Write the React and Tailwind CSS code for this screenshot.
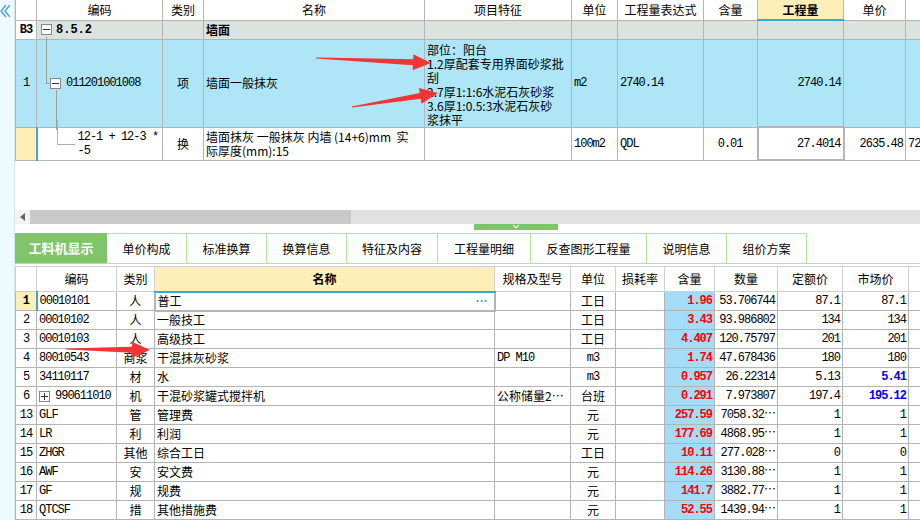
import React from "react";

const num = "font-['Liberation_Mono','Noto_Sans_CJK_SC',monospace] text-[12px] tracking-[-1px]";
const cell = "border border-[#b4b4b4] p-0 align-middle";

const lowerRows = [
  { no: "1", code: "00010101", type: "人", name: "普工", spec: "", unit: "工日", qty: "1.96", amount: "53.706744", quota: "87.1", market: "87.1" },
  { no: "2", code: "00010102", type: "人", name: "一般技工", spec: "", unit: "工日", qty: "3.43", amount: "93.986802", quota: "134", market: "134" },
  { no: "3", code: "00010103", type: "人", name: "高级技工", spec: "", unit: "工日", qty: "4.407", amount: "120.75797", quota: "201", market: "201" },
  { no: "4", code: "80010543", type: "商浆", name: "干混抹灰砂浆", spec: "DP M10", unit: "m3", qty: "1.74", amount: "47.678436", quota: "180", market: "180" },
  { no: "5", code: "34110117", type: "材", name: "水", spec: "", unit: "m3", qty: "0.957", amount: "26.22314", quota: "5.13", market: "5.41", blue: true },
  { no: "6", code: "990611010", plus: true, type: "机", name: "干混砂浆罐式搅拌机", spec: "公称储量2⋯", unit: "台班", qty: "0.291", amount: "7.973807", quota: "197.4", market: "195.12", blue: true },
  { no: "13", code: "GLF", type: "管", name: "管理费", spec: "", unit: "元", qty: "257.59", amount: "7058.32⋯", quota: "1", market: "1" },
  { no: "14", code: "LR", type: "利", name: "利润", spec: "", unit: "元", qty: "177.69", amount: "4868.95⋯", quota: "1", market: "1" },
  { no: "15", code: "ZHGR", type: "其他", name: "综合工日", spec: "", unit: "工日", qty: "10.11", amount: "277.028⋯", quota: "0", market: "0" },
  { no: "16", code: "AWF", type: "安", name: "安文费", spec: "", unit: "元", qty: "114.26", amount: "3130.88⋯", quota: "1", market: "1" },
  { no: "17", code: "GF", type: "规", name: "规费", spec: "", unit: "元", qty: "141.7", amount: "3882.77⋯", quota: "1", market: "1" },
  { no: "18", code: "QTCSF", type: "措", name: "其他措施费", spec: "", unit: "元", qty: "52.55", amount: "1439.94⋯", quota: "1", market: "1" },
];

const tabs = ["单价构成", "标准换算", "换算信息", "特征及内容", "工程量明细", "反查图形工程量", "说明信息", "组价方案"];
const tabWidths = ["w-[80px]", "w-[80px]", "w-[80px]", "w-[91px]", "w-[93px]", "w-[116px]", "w-[80px]", "w-[80px]"];

const Box = ({ sign }) => (
  <span className="inline-flex w-[11px] h-[11px] border border-[#888] bg-white items-center justify-center shrink-0">
    <svg width="7" height="7" viewBox="0 0 7 7">
      <path d="M0 3.5H7" stroke="#333" strokeWidth="1" />
      {sign === "+" && <path d="M3.5 0V7" stroke="#333" strokeWidth="1" />}
    </svg>
  </span>
);

const arrow = (x1, y1, x2, y2) => {
  const dx = x2 - x1, dy = y2 - y1;
  const L = Math.hypot(dx, dy);
  const ux = dx / L, uy = dy / L, nx = -uy, ny = ux;
  const bx = x2 - ux * 18, by = y2 - uy * 18;
  const p = [
    [x1 + nx * 0.5, y1 + ny * 0.5],
    [bx + nx * 3, by + ny * 3],
    [bx + nx * 8, by + ny * 8],
    [x2, y2],
    [bx - nx * 8, by - ny * 8],
    [bx - nx * 3, by - ny * 3],
    [x1 - nx * 0.5, y1 - ny * 0.5],
  ];
  return p.map((q) => q.join(",")).join(" ");
};

const App = () => {
  return (
    <div className="relative w-[920px] h-[520px] overflow-hidden bg-white flex font-['Noto_Sans_CJK_SC',sans-serif] text-[12px] text-black leading-[14px]">
      {/* left collapse strip */}
      <div className="w-[15px] shrink-0 bg-[#eefaff] border-r border-[#d6e6ee] pt-[4px]">
        <svg width="10" height="14" viewBox="0 0 10 14">
          <path d="M6 1L1 7L6 13" fill="none" stroke="#3ba0dc" strokeWidth="1.3" />
          <path d="M10 1L5 7L10 13" fill="none" stroke="#3ba0dc" strokeWidth="1.3" />
        </svg>
      </div>

      <div className="flex-1 flex flex-col min-w-0">
        {/* top table */}
        <div className="h-[210px] overflow-hidden">
          <table className="table-fixed border-collapse w-[935px]">
            <colgroup>
              <col className="w-[21px]" />
              <col className="w-[126px]" />
              <col className="w-[41px]" />
              <col className="w-[221px]" />
              <col className="w-[147px]" />
              <col className="w-[46px]" />
              <col className="w-[86px]" />
              <col className="w-[54px]" />
              <col className="w-[86px]" />
              <col className="w-[62px]" />
              <col className="w-[45px]" />
            </colgroup>
            <thead>
              <tr className="h-[20px] text-center">
                <th className={`${cell} border-t-0 font-normal`}></th>
                <th className={`${cell} border-t-0 font-normal`}>编码</th>
                <th className={`${cell} border-t-0 font-normal`}>类别</th>
                <th className={`${cell} border-t-0 font-normal`}>名称</th>
                <th className={`${cell} border-t-0 font-normal`}>项目特征</th>
                <th className={`${cell} border-t-0 font-normal`}>单位</th>
                <th className={`${cell} border-t-0 font-normal`}>工程量表达式</th>
                <th className={`${cell} border-t-0 font-normal`}>含量</th>
                <th className={`${cell} border-t-0 border-b-[2px] border-b-[#3ba7d8] bg-[#fdefb7] font-bold`}>工程量</th>
                <th className={`${cell} border-t-0 font-normal`}>单价</th>
                <th className={`${cell} border-t-0 font-normal`}></th>
              </tr>
            </thead>
            <tbody>
              <tr className="h-[19px] bg-[#dbe3df] font-bold">
                <td className={`${cell} bg-white text-center ${num}`}>B3</td>
                <td className={`${cell} relative`}>
                  <div className="flex items-center gap-[4px] pl-[4px]">
                    <Box sign="-" />
                    <span className={`${num} tracking-[0px]`}>8.5.2</span>
                  </div>
                </td>
                <td className={cell}></td>
                <td className={`${cell} pl-[2px]`}>墙面</td>
                <td className={cell}></td>
                <td className={cell}></td>
                <td className={cell}></td>
                <td className={cell}></td>
                <td className={cell}></td>
                <td className={cell}></td>
                <td className={cell}></td>
              </tr>
              <tr className="h-[88px] bg-[#aee6f8]">
                <td className={`${cell} text-center ${num}`}>1</td>
                <td className={`${cell} relative`}>
                  <span className="absolute left-[9px] top-[-3px] h-[46px] w-px bg-[#a0a0a0]"></span>
                  <span className="absolute left-[9px] top-[43px] w-[5px] h-px bg-[#a0a0a0]"></span>
                  <span className="absolute left-[19px] top-[50px] h-[40px] w-px bg-[#a0a0a0]"></span>
                  <div className="flex items-center gap-[5px] pl-[13px]">
                    <Box sign="-" />
                    <span className={num}>011201001008</span>
                  </div>
                </td>
                <td className={`${cell} text-center`}>项</td>
                <td className={`${cell} pl-[2px]`}>墙面一般抹灰</td>
                <td className={`${cell} align-top pl-[2px] pt-[3px] whitespace-nowrap overflow-hidden`}>
                  部位：阳台<br />1.2厚配套专用界面砂浆批<br />刮<br />2.7厚1:1:6水泥石灰砂浆<br />3.6厚1:0.5:3水泥石灰砂<br />浆抹平
                </td>
                <td className={`${cell} pl-[2px] ${num}`}>m2</td>
                <td className={`${cell} pl-[2px] ${num}`}>2740.14</td>
                <td className={cell}></td>
                <td className={`${cell} text-right pr-[2px] ${num}`}>2740.14</td>
                <td className={cell}></td>
                <td className={cell}></td>
              </tr>
              <tr className="h-[33px]">
                <td className={`${cell} bg-[#fdefb7] border-r-[2px] border-r-[#3ba7d8]`}></td>
                <td className={`${cell} relative`}>
                  <span className="absolute left-[19px] top-[-8px] h-[25px] w-px bg-[#b0b0b0]"></span>
                  <span className="absolute left-[19px] top-[16px] w-[18px] h-px bg-[#b0b0b0]"></span>
                  <div className={`pl-[40px] ${num} leading-[14px]`}>12-1 + 12-3 *<br />-5</div>
                </td>
                <td className={`${cell} text-center`}>换</td>
                <td className={`${cell} pl-[2px] leading-[14px]`}>墙面抹灰 一般抹灰 内墙 (14+6)mm&nbsp;&nbsp;实<br />际厚度(mm):15</td>
                <td className={cell}></td>
                <td className={`${cell} pl-[2px] ${num}`}>100m2</td>
                <td className={`${cell} pl-[2px] ${num}`}>QDL</td>
                <td className={`${cell} text-right pr-[14px] ${num}`}>0.01</td>
                <td className={`${cell} border-[2px] border-[#808080] text-right pr-[2px] ${num}`}>27.4014</td>
                <td className={`${cell} text-right pr-[2px] ${num}`}>2635.48</td>
                <td className={`${cell} pl-[2px] ${num} whitespace-nowrap overflow-hidden`}>7221.8</td>
              </tr>
            </tbody>
          </table>
        </div>

        {/* horizontal scrollbar */}
        <div className="h-[14px] flex bg-[#e1e1e1]">
          <div className="w-[15px] flex items-center justify-center bg-[#f2f2f2]">
            <svg width="5" height="8" viewBox="0 0 5 8"><path d="M5 0L0 4L5 8Z" fill="#666" /></svg>
          </div>
          <div className="w-[321px] bg-[#c9c9c9]"></div>
        </div>

        {/* splitter handle */}
        <div className="h-[9px] flex">
          <div className="ml-[459px] w-[84px] h-[6px] bg-[#7fc46b] flex justify-center">
            <svg width="8" height="6" viewBox="0 0 8 6"><path d="M1 1L4 4L7 1" fill="none" stroke="#fff" strokeWidth="1.2" /></svg>
          </div>
        </div>

        {/* tabs */}
        <div className="h-[31px] flex border-b border-[#b2e59a]">
          <div className="w-[92px] bg-[#80c46c] text-white font-bold text-[13px] flex items-center justify-center">工料机显示</div>
          {tabs.map((t, i) => (
            <div key={t} className={`${tabWidths[i]} border-t border-r border-[#b2e59a] flex items-center justify-center text-[12px]`}>
              {t}
            </div>
          ))}
        </div>

        {/* lower table */}
        <div className="mt-[2px] overflow-hidden">
          <table className="table-fixed border-collapse w-[925px]">
            <colgroup>
              <col className="w-[21px]" />
              <col className="w-[80px]" />
              <col className="w-[38px]" />
              <col className="w-[340px]" />
              <col className="w-[76px]" />
              <col className="w-[45px]" />
              <col className="w-[49px]" />
              <col className="w-[50px]" />
              <col className="w-[63px]" />
              <col className="w-[65px]" />
              <col className="w-[66px]" />
              <col className="w-[32px]" />
            </colgroup>
            <thead>
              <tr className="h-[25px] text-center">
                <th className="border border-[#cfcfcf] font-normal"></th>
                <th className="border border-[#cfcfcf] font-normal">编码</th>
                <th className="border border-[#cfcfcf] font-normal">类别</th>
                <th className="border border-[#cfcfcf] border-b-[2px] border-b-[#3ba7d8] bg-[#fdefb7] font-bold">名称</th>
                <th className="border border-[#cfcfcf] font-normal">规格及型号</th>
                <th className="border border-[#cfcfcf] font-normal">单位</th>
                <th className="border border-[#cfcfcf] font-normal">损耗率</th>
                <th className="border border-[#cfcfcf] border-b-[2px] border-b-[#a4dcf8] font-normal">含量</th>
                <th className="border border-[#cfcfcf] font-normal">数量</th>
                <th className="border border-[#cfcfcf] font-normal">定额价</th>
                <th className="border border-[#cfcfcf] font-normal">市场价</th>
                <th className="border border-[#cfcfcf] font-normal"></th>
              </tr>
            </thead>
            <tbody>
              {lowerRows.map((r, i) => (
                <tr key={r.no} className="h-[19px]">
                  <td className={`${cell} text-center ${num} ${i === 0 ? "bg-[#fdefb7] font-bold border-r-[2px] border-r-[#3ba7d8]" : ""}`}>{r.no}</td>
                  <td className={`${cell} pl-[2px]`}>
                    <div className="flex items-center gap-[5px]">
                      {r.plus && <Box sign="+" />}
                      <span className={num}>{r.code}</span>
                    </div>
                  </td>
                  <td className={`${cell} text-center`}>{r.type}</td>
                  <td className={`${cell} pl-[2px] ${i === 0 ? "border-[2px] border-[#808080]" : ""}`}>
                    <div className="flex justify-between pr-[6px]">
                      <span>{r.name}</span>
                      {i === 0 && <span className="text-[#3ba0dc] font-bold">⋯</span>}
                    </div>
                  </td>
                  <td className={`${cell} pl-[2px] whitespace-nowrap overflow-hidden ${/^[A-Z]/.test(r.spec) ? num : ""}`}>{r.spec}</td>
                  <td className={`${cell} text-center ${/^m/.test(r.unit) ? num : ""}`}>{r.unit}</td>
                  <td className={cell}></td>
                  <td className={`${cell} bg-[#a4dcf8] text-right pr-[2px] font-bold text-[#ff0000] ${num}`}>{r.qty}</td>
                  <td className={`${cell} text-right pr-[2px] ${num} whitespace-nowrap overflow-hidden`}>{r.amount}</td>
                  <td className={`${cell} text-right pr-[2px] ${num}`}>{r.quota}</td>
                  <td className={`${cell} text-right pr-[2px] ${num} ${r.blue ? "text-[#0000ff] font-bold" : ""}`}>{r.market}</td>
                  <td className={cell}></td>
                </tr>
              ))}
            </tbody>
          </table>
        </div>
      </div>

      {/* red annotation arrows */}
      <svg className="absolute inset-0 pointer-events-none" width="920" height="520">
        <polygon points={arrow(316, 58, 431, 63)} fill="#f03535" />
        <polygon points={arrow(352, 107, 438, 93)} fill="#f03535" />
        <polygon points={arrow(66, 349, 150, 350)} fill="#f03535" />
      </svg>
    </div>
  );
};

export default App;
